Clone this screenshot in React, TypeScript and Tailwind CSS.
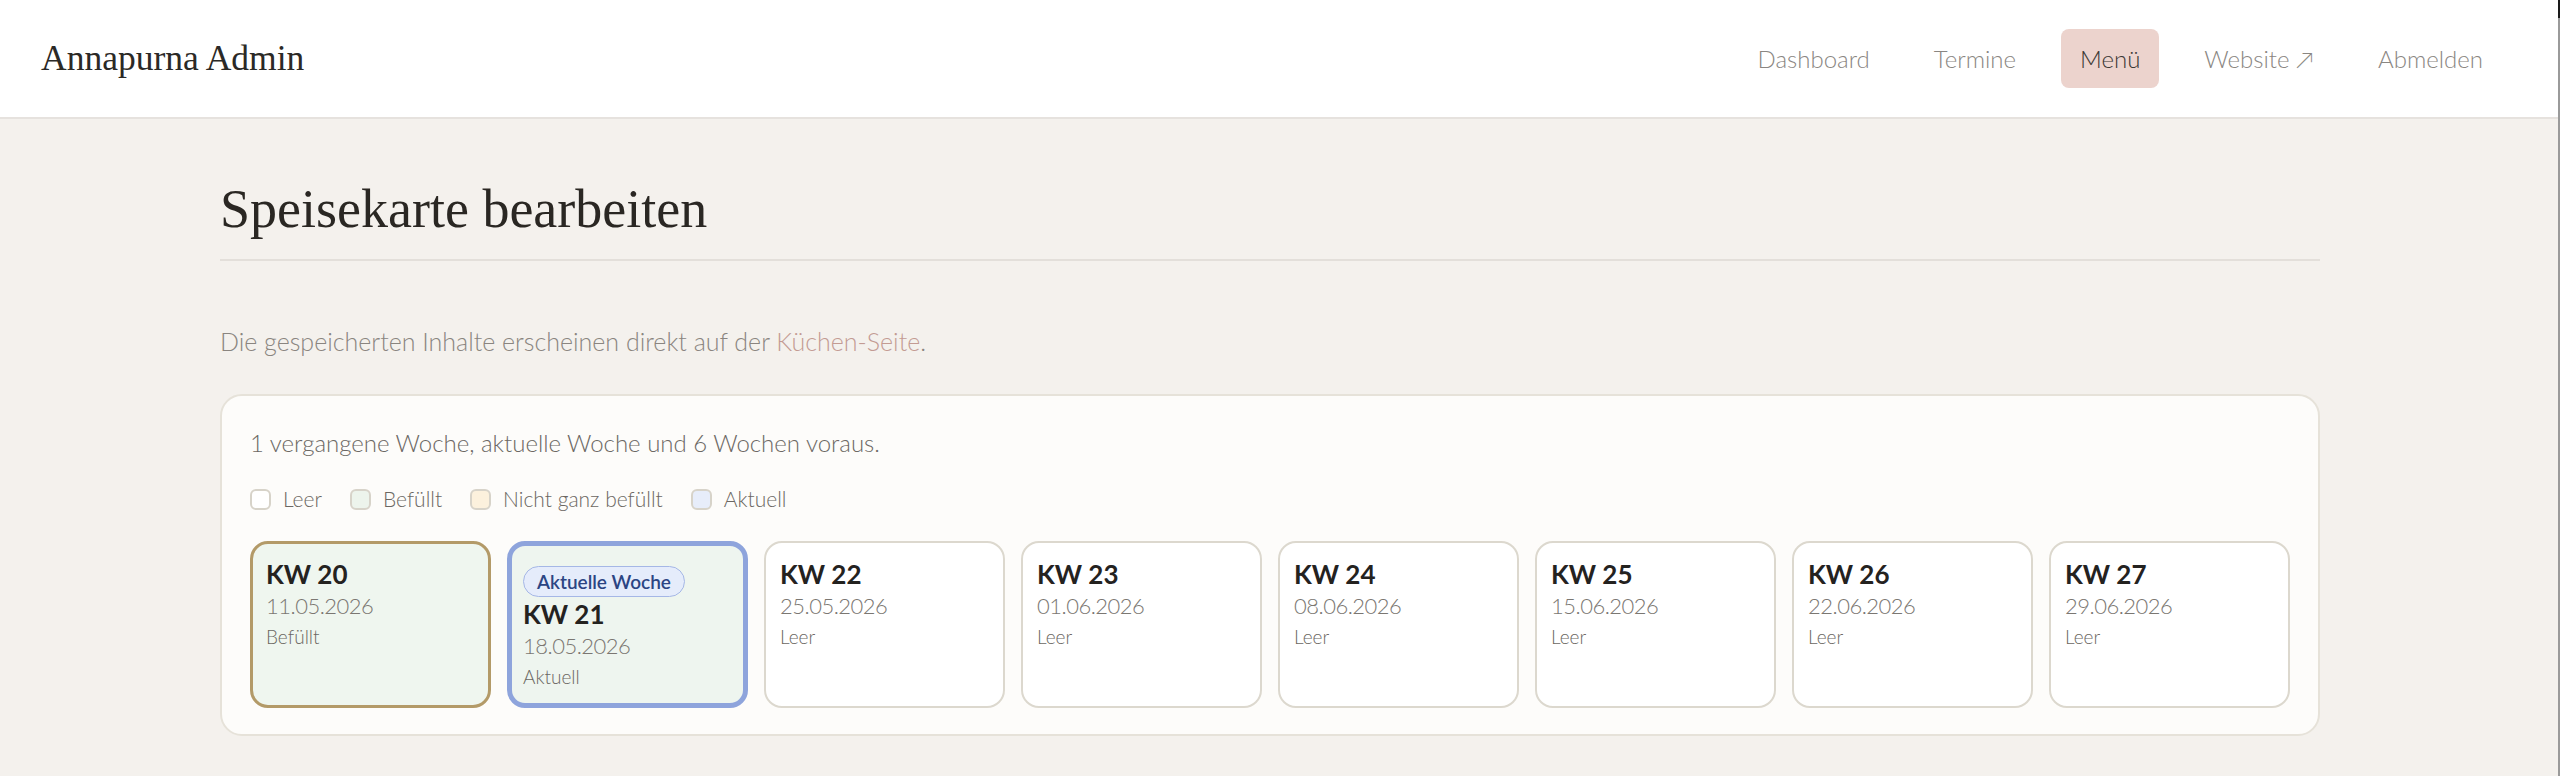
import React from "react";

type WeekStatus = "filled" | "current" | "empty";

type Week = {
  kw: number;
  date: string;
  status: WeekStatus;
};

const weeks: Week[] = [
  { kw: 20, date: "11.05.2026", status: "filled" },
  { kw: 21, date: "18.05.2026", status: "current" },
  { kw: 22, date: "25.05.2026", status: "empty" },
  { kw: 23, date: "01.06.2026", status: "empty" },
  { kw: 24, date: "08.06.2026", status: "empty" },
  { kw: 25, date: "15.06.2026", status: "empty" },
  { kw: 26, date: "22.06.2026", status: "empty" },
  { kw: 27, date: "29.06.2026", status: "empty" },
];

const navItems = [
  { label: "Dashboard" },
  { label: "Termine" },
  { label: "Menü", active: true },
  { label: "Website ↗" },
  { label: "Abmelden" },
];

const legend = [
  { label: "Leer", swatch: "bg-white" },
  { label: "Befüllt", swatch: "bg-[#edf4ec]" },
  { label: "Nicht ganz befüllt", swatch: "bg-[#fcf1dd]" },
  { label: "Aktuell", swatch: "bg-[#e7edfa]" },
];

const statusLabel: Record<WeekStatus, string> = {
  filled: "Befüllt",
  current: "Aktuell",
  empty: "Leer",
};

const cardStyle: Record<WeekStatus, string> = {
  filled: "border-[3px] border-[#b39a68] bg-[#eff6ef] px-[13px] pt-[13px]",
  current: "border-[5px] border-[#8ea4dc] bg-[#eef5ef] px-[11px] pt-[20px]",
  empty: "border-2 border-[#dcd8ce] bg-white px-[14px] pt-[14px]",
};

function WeekCard({ week }: { week: Week }) {
  return (
    <div
      className={`flex h-[167px] flex-col rounded-[18px] ${cardStyle[week.status]}`}
    >
      {week.status === "current" && (
        <span className="self-start rounded-full border border-[#a5b7e6] bg-[#e5ecfb] px-[13px] py-[2px] text-[19px] leading-[25px] font-semibold text-[#2c4583]">
          Aktuelle Woche
        </span>
      )}
      <div className="text-[26px] leading-[34px] font-bold text-[#24221f]">
        KW {week.kw}
      </div>
      <div className="text-[22px] leading-[30px] font-light tracking-[-0.5px] text-[#7b7772]">
        {week.date}
      </div>
      <div className="mt-[2px] text-[19px] leading-[28px] font-light text-[#6b6762]">
        {statusLabel[week.status]}
      </div>
    </div>
  );
}

export default function App() {
  return (
    <div className="relative min-h-[776px] bg-[#f4f1ed] font-['Lato','Noto_Sans',sans-serif] text-[#2a2723]">
      <header className="flex h-[119px] items-center justify-between border-b-2 border-[#e6e2de] bg-white pr-[58px] pl-[41px]">
        <div className="font-['Liberation_Serif',serif] text-[35.5px] leading-none text-[#2b2926]">
          Annapurna Admin
        </div>
        <nav className="flex items-center gap-[26px]">
          {navItems.map((item) => (
            <a
              key={item.label}
              className={
                item.active
                  ? "flex h-[59px] items-center rounded-[8px] bg-[#ecd3cd] px-[19px] text-[24px] font-light text-[#3b3835]"
                  : "flex h-[59px] items-center px-[19px] text-[24px] font-light text-[#8a8682]"
              }
            >
              {item.label}
            </a>
          ))}
        </nav>
      </header>

      <main className="ml-[220px] w-[2100px] pt-[58px] pb-[39px]">
        <h1 className="border-b-2 border-[#e3dfda] pb-[17px] font-['Liberation_Serif',serif] text-[54px] leading-[65px] font-normal text-[#2a2723]">
          Speisekarte bearbeiten
        </h1>

        <p className="mt-[62px] text-[25px] leading-[36px] font-light text-[#8a8580]">
          Die gespeicherten Inhalte erscheinen direkt auf der{" "}
          <a className="text-[#c39b93]">Küchen-Seite</a>.
        </p>

        <section className="mt-[35px] rounded-[22px] border-2 border-[#e6e2d9] bg-[#fdfcfa] px-[28px] pt-[30px] pb-[26px]">
          <p className="text-[24px] leading-[33px] font-light text-[#6c6864]">
            1 vergangene Woche, aktuelle Woche und 6 Wochen voraus.
          </p>

          <div className="mt-[27px] flex items-center gap-[28px]">
            {legend.map((l) => (
              <div key={l.label} className="flex items-center gap-[12px]">
                <span
                  className={`h-[21px] w-[21px] rounded-[6px] border-2 border-[#d7d3c9] ${l.swatch}`}
                />
                <span className="text-[21px] leading-[26px] font-light text-[#6b6762]">
                  {l.label}
                </span>
              </div>
            ))}
          </div>

          <div className="mt-[29px] grid grid-cols-8 gap-4">
            {weeks.map((w) => (
              <WeekCard key={w.kw} week={w} />
            ))}
          </div>
        </section>
      </main>

      {/* page scrollbar edge */}
      <div className="absolute top-0 right-0 flex h-full w-[2px] flex-col bg-[#9a9a9a]">
        <div className="h-[18px] bg-[#1a1a1a]" />
      </div>
    </div>
  );
}
